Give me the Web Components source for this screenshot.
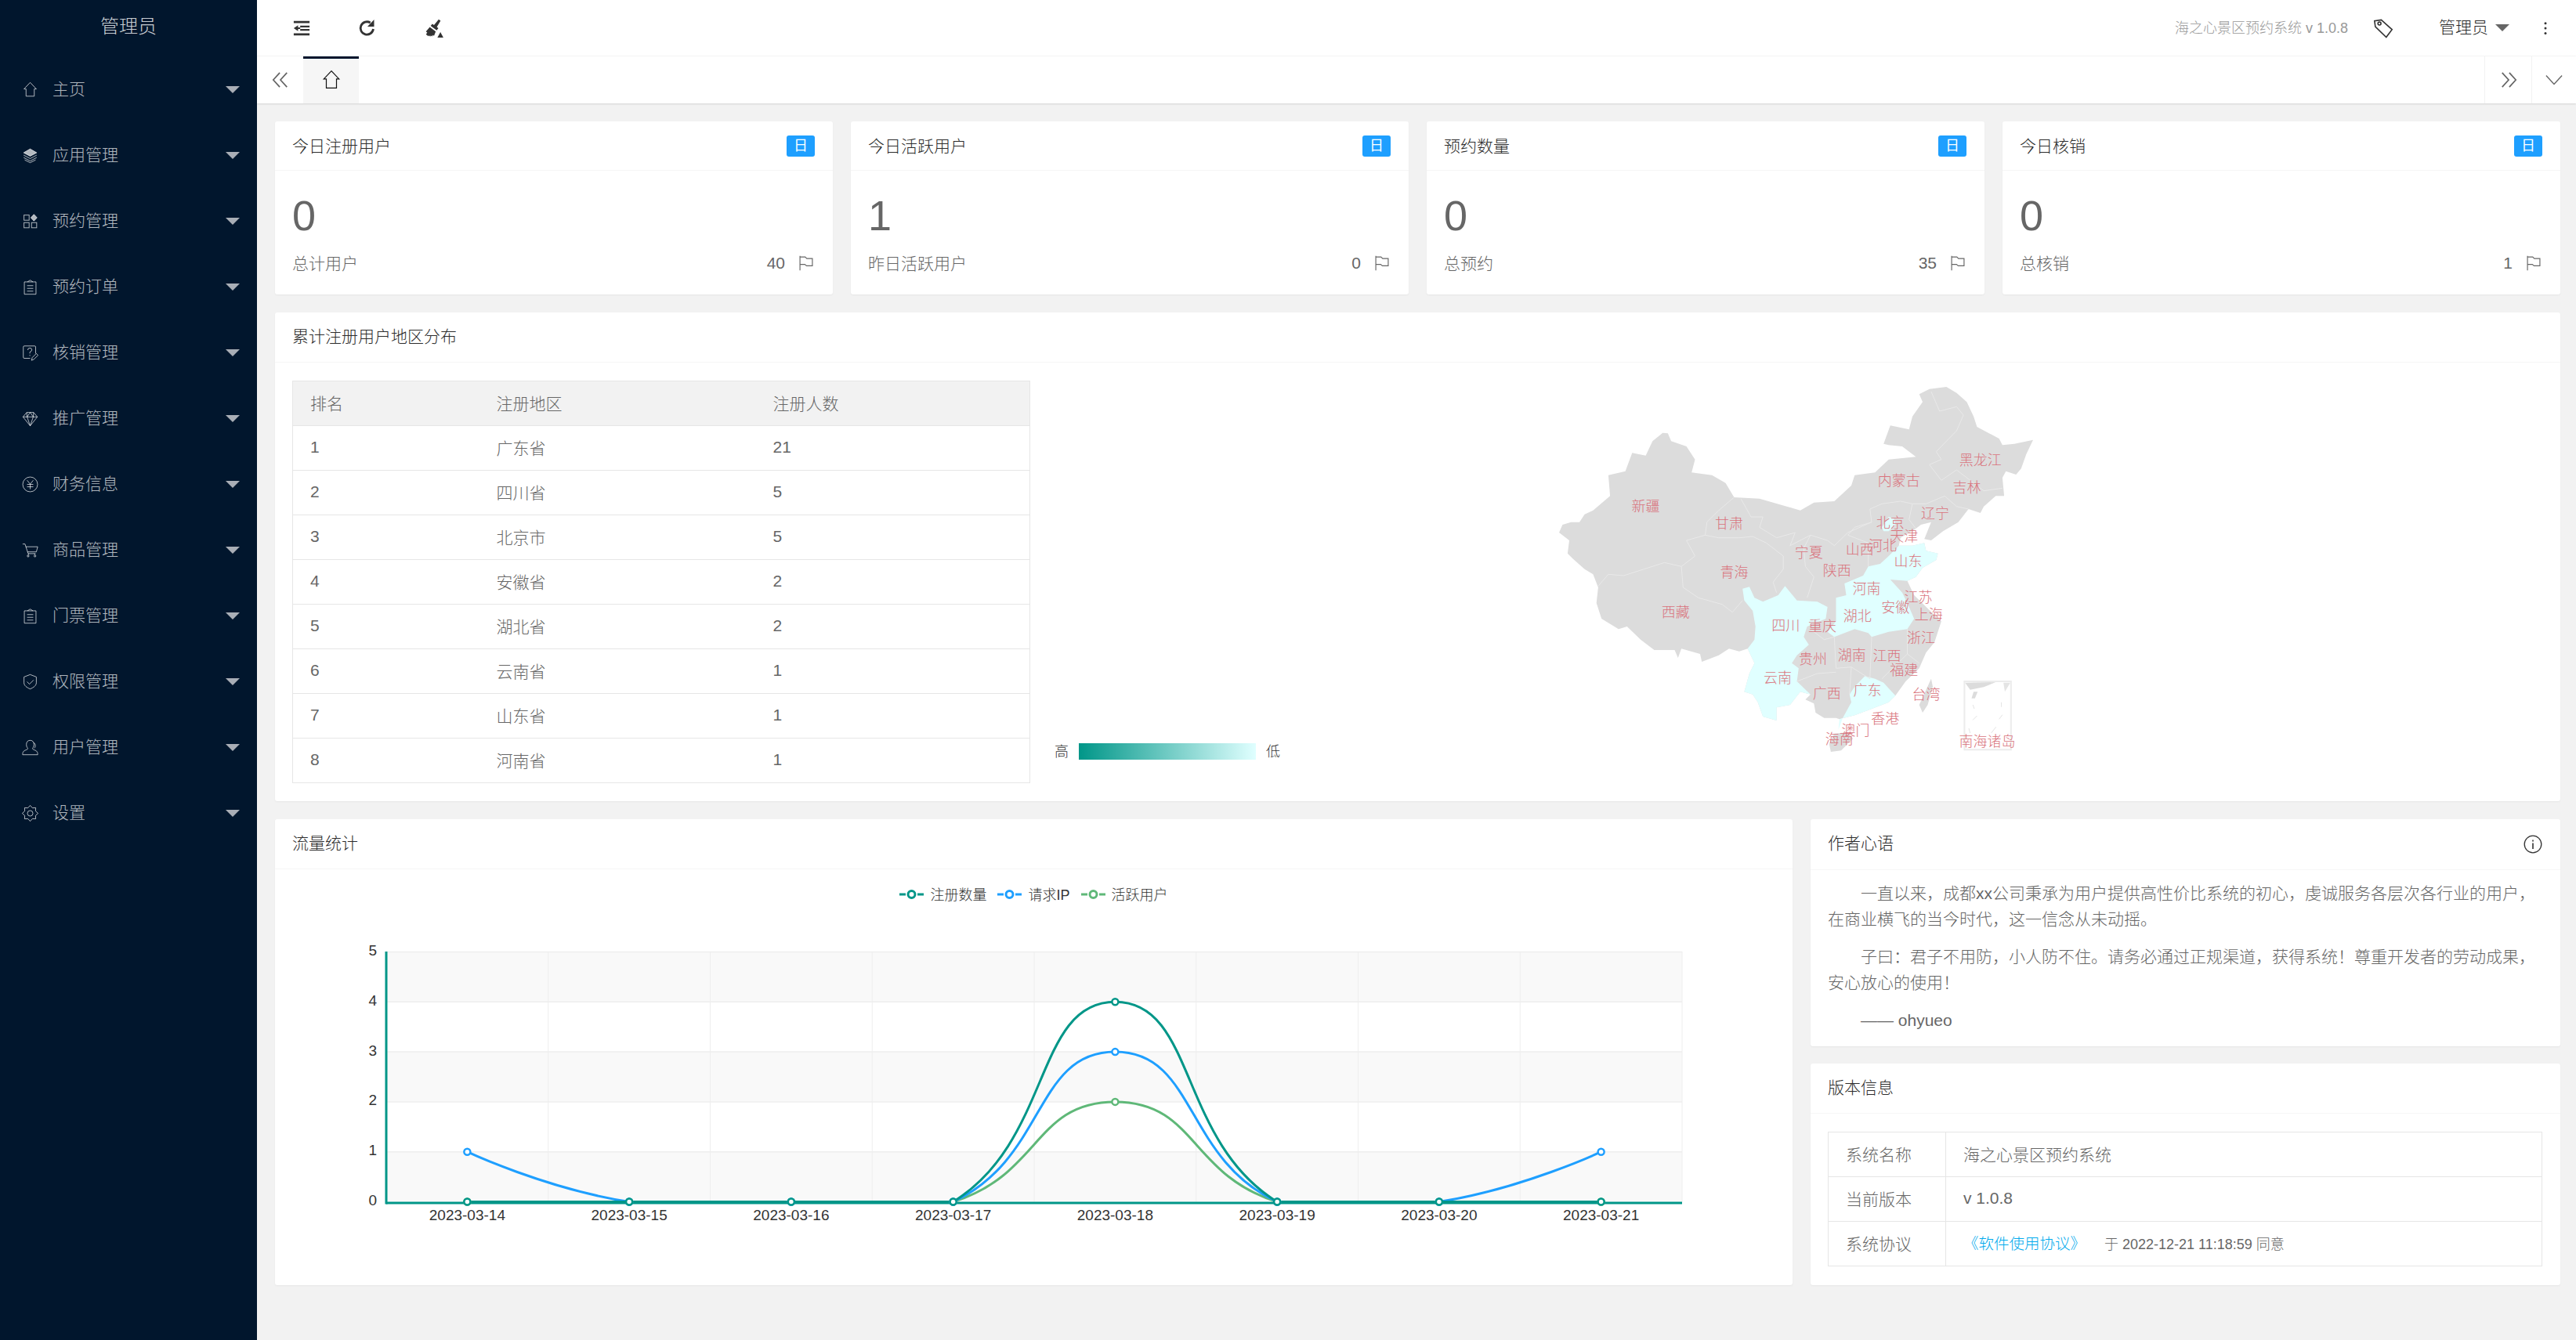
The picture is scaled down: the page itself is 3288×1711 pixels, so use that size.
<!DOCTYPE html>
<html lang="zh-CN">
<head>
<meta charset="utf-8">
<title>海之心景区预约系统</title>
<style>
  html, body {
    background: #f2f2f2;
    color: #333;
    font-family: 'Liberation Sans', 'Noto Sans CJK SC', sans-serif;
    font-weight: 300;
    height: 100%;
    margin: 0;
    overflow: hidden;
  }
</style>
</head>
<body>
<admin-shell>
  <side-menu slot="side" logo="管理员">
    <side-item icon="home" label="主页"></side-item>
    <side-item icon="layers" label="应用管理"></side-item>
    <side-item icon="apps" label="预约管理"></side-item>
    <side-item icon="clipboard" label="预约订单"></side-item>
    <side-item icon="verify" label="核销管理"></side-item>
    <side-item icon="gem" label="推广管理"></side-item>
    <side-item icon="yen" label="财务信息"></side-item>
    <side-item icon="cart" label="商品管理"></side-item>
    <side-item icon="clipboard" label="门票管理"></side-item>
    <side-item icon="shield" label="权限管理"></side-item>
    <side-item icon="user" label="用户管理"></side-item>
    <side-item icon="gear" label="设置"></side-item>
  </side-menu>
  <top-bar slot="top" version="海之心景区预约系统 v 1.0.8" user="管理员"></top-bar>
  <tab-bar slot="top"></tab-bar>

  <div class="stats" style="display:grid;grid-template-columns:repeat(4,1fr);gap:23px">
    <stat-card title="今日注册用户" value="0" note="总计用户" total="40"></stat-card>
    <stat-card title="今日活跃用户" value="1" note="昨日活跃用户" total="0"></stat-card>
    <stat-card title="预约数量" value="0" note="总预约" total="35"></stat-card>
    <stat-card title="今日核销" value="0" note="总核销" total="1"></stat-card>
  </div>

  <panel-card title="累计注册用户地区分布">
    <div style="display:flex;padding:23px 23px 23px 22px">
      <rank-table></rank-table>
      <china-map></china-map>
    </div>
  </panel-card>

  <div style="display:grid;grid-template-columns:1fr 957px;gap:23px">
    <panel-card title="流量统计">
      <traffic-chart></traffic-chart>
    </panel-card>
    <div style="display:flex;flex-direction:column;gap:22px">
      <panel-card title="作者心语" head="65">
        <ui-icon slot="action" name="info" size="24" style="color:#333"></ui-icon>
        <author-note></author-note>
      </panel-card>
      <panel-card title="版本信息" style="flex:1">
        <version-table></version-table>
      </panel-card>
    </div>
  </div>
</admin-shell>

<script>
// Gear outline, 8 teeth
function gearPath() {
  let d = '';
  for( let i = 0; i < 16; i++ ) {
    const a = ( i / 16 ) * Math.PI * 2;
    const r = i % 2 === 0 ? 11.5 : 8.5;
    d += `${i === 0 ? 'M' : 'L'}${( 12 + Math.cos( a ) * r ).toFixed( 1 )} ${( 12 + Math.sin( a ) * r ).toFixed( 1 )}`;
  }
  return d + 'Z';
}

const ICONS = {
  home: '<path d="M12 1.5 3 11h3v10.5h12V11h3z"/>',
  layers: '<path d="M12 2.500 2.500 8l9.500 5 9.500-5z" fill="currentColor"/><path d="M2.500 11.500l9.500 5 9.500-5M2.500 15l9.500 5 9.500-5M4 18.500l8 4 8-4"/>',
  apps: '<rect x="3" y="3" width="7.500" height="7.500"/><path d="M17.500 2l4.500 4.800-4.500 4.800-4.500-4.800z" fill="currentColor"/><rect x="3" y="14" width="7.500" height="7.500"/><rect x="14" y="14" width="7.500" height="7.500"/>',
  clipboard: '<path d="M8 4.500H3.500v18h17v-18H16M8 4.500 12 2l4 2.500z"/><path d="M7.500 10h9M7.500 14h9M7.500 18h9"/>',
  verify: '<path d="M20 13V3.500q0-1.500-1.500-1.500H3.500Q2 2 2 3.500v15Q2 20 3.500 20H12"/><path d="M8.500 8q0-3 3-3t3 2.800q0 1.700-3 3.200v2M11.500 15v1.500"/><path d="M14 23l1-4 6-6 2.500 2.500-6 6z"/>',
  gem: '<path d="M7 3h10l5.500 6.500L12 22.500 1.500 9.500zM1.500 9.500h21M7.500 9.500 12 22.500l4.500-13M7 3l.5 6.500L12 3l4.500 6.500L17 3"/>',
  yen: '<circle cx="12" cy="12" r="10.800"/><path d="M7.500 6l4.500 5.500L16.500 6M12 11.500V19M7.500 12h9M7.500 15.500h9"/>',
  cart: '<path d="M1 3h3.500L9 17h11M5.500 7H23l-2 7.500H8M10 17l-1 2M18 17l1 2"/><circle cx="9" cy="20.500" r="1.300"/><circle cx="19" cy="20.500" r="1.300"/>',
  shield: '<path d="M12 1.500 3 5v8.500c0 4 4 7 9 9 5-2 9-5 9-9V5z"/><path d="M7.500 12l3.500 3.500 6-6"/>',
  user: '<path d="M1 22.500h22c0-4-1-5.500-5-7-1.500-.6-2.500-1-2.500-2.500 1.500-1.500 2-3.500 2-5.500 0-3.500-2-6-5.500-6S6.500 4 6.500 7.500c0 2 .5 4 2 5.500 0 1.500-1 1.900-2.500 2.500-4 1.500-5 3-5 7z"/><path d="M17 5c3 1 3.500 6 1 8"/>',
  gear: `<path d="${gearPath()}"/><circle cx="12" cy="12" r="4"/>`,
  outdent: '<path fill="currentColor" stroke="none" d="M1 2h22v3H1zM10 8.500h13v2.500H10zM10 13h13v2.500H10zM1 19h22v3H1zM1 12l6-4v3h3v2.200H7v3z"/>',
  refresh: '<path stroke-width="2.800" d="M19.500 13a8.200 8.200 0 1 1-3.800-8"/><path fill="currentColor" stroke="none" d="M20.500 1v9h-8.500z"/>',
  brush: '<path fill="currentColor" stroke="none" d="M17.500 1.500l2.200 1.800-4.400 7.200 1.800 1.500-2 2.500L8 9.200l2-2.300 2 1.500z"/><path fill="currentColor" stroke="none" d="M7 10.500l7 5.500-2 5-1.500-1-.8 1.700-1.500-1.200-.6 1.500L6 20.500l-.6 1L3.500 20l-1-.8 1.500-2-1.500-1.200z"/><path fill="currentColor" stroke="none" d="M19.500 16.500l3.500 6.500h-7z"/>',
  tag: '<path stroke-width="1.500" d="M3 7V2h8l11 13-8 8L3 9z" transform="rotate(-8 12 12)"/><circle cx="7.500" cy="6.500" r="1.800" stroke-width="1.500"/>',
  flag: '<path stroke-width="1.400" d="M2.500 1v22M2.500 2.500h8l2.500 2.500h8.500v11h-9L10 14H2.500"/>',
  dots: '<g fill="currentColor" stroke="none"><circle cx="12" cy="3.500" r="2"/><circle cx="12" cy="12" r="2"/><circle cx="12" cy="20.500" r="2"/></g>',
  info: '<circle cx="12" cy="12" r="10.800" stroke-width="1.300"/><path stroke-width="1.600" d="M12 10.500v7.500M12 6.500v2"/>',
  left: '<path stroke-width="1.900" d="M11 2 2 12l9 10M21 2l-9 10 9 10"/>',
  right: '<path stroke-width="1.900" d="M3 2l9 10-9 10M13 2l9 10-9 10"/>',
  down: '<path stroke-width="1.500" d="M1 6l11 12L23 6"/>'
};

class UiIcon extends HTMLElement {
  constructor() {
    super();
    this.attachShadow( {mode: 'open'} );
  }

  static get observedAttributes() {
    return ['name', 'size'];
  }

  attributeChangedCallback() {
    this._render();
  }

  connectedCallback() {
    this._render();
  }

  _render() {
    const size = this.getAttribute( 'size' ) || 21;
    this.shadowRoot.innerHTML = `
      <style>
        :host { display: inline-flex; flex: none; line-height: 0; }
        svg { fill: none; stroke: currentColor; stroke-width: 1.100; }
      </style>
      <svg width="${size}" height="${size}" viewBox="0 0 24 24">${ICONS[this.getAttribute( 'name' )] || ''}</svg>
    `;
  }
}
customElements.define( 'ui-icon', UiIcon );

class AdminShell extends HTMLElement {
  constructor() {
    super();
    this.attachShadow( {mode: 'open'} ).innerHTML = `
      <style>
        :host { display: flex; height: 1711px; width: 3288px; }
        .side { flex: none; width: 328px; }
        .main { display: flex; flex: 1; flex-direction: column; min-width: 0; }
        .content { display: flex; flex-direction: column; gap: 23px; padding: 23px 20px 23px 23px; }
      </style>
      <div class="side"><slot name="side"></slot></div>
      <div class="main">
        <slot name="top"></slot>
        <div class="content"><slot></slot></div>
      </div>
    `;
  }
}
customElements.define( 'admin-shell', AdminShell );

class SideMenu extends HTMLElement {
  constructor() {
    super();
    this.attachShadow( {mode: 'open'} ).innerHTML = `
      <style>
        :host { background: #01162d; display: block; height: 1711px; }
        .logo {
          color: rgba( 255, 255, 255, .8 );
          font-size: 24px;
          height: 70px;
          line-height: 68px;
          padding-bottom: 2px;
          text-align: center;
        }
      </style>
      <div class="logo"></div>
      <slot></slot>
    `;
  }
  connectedCallback() {
    this.shadowRoot.querySelector( '.logo' ).textContent = this.getAttribute( 'logo' );
  }
}
customElements.define( 'side-menu', SideMenu );

class SideItem extends HTMLElement {
  constructor() {
    super();
    this.attachShadow( {mode: 'open'} ).innerHTML = `
      <style>
        :host {
          align-items: center;
          color: rgba( 255, 255, 255, .7 );
          display: flex;
          font-size: 21px;
          gap: 18px;
          height: 84px;
          padding: 0 22px 0 28px;
        }
        span { padding-bottom: 4px; }
        i {
          border-left: 9px solid transparent;
          border-right: 9px solid transparent;
          border-top: 9px solid #a9aeb6;
          margin-left: auto;
        }
      </style>
      <ui-icon></ui-icon>
      <span></span>
      <i></i>
    `;
  }
  connectedCallback() {
    this.shadowRoot.querySelector( 'ui-icon' ).setAttribute( 'name', this.getAttribute( 'icon' ) );
    this.shadowRoot.querySelector( 'span' ).textContent = this.getAttribute( 'label' );
  }
}
customElements.define( 'side-item', SideItem );

class TopBar extends HTMLElement {
  constructor() {
    super();
    this.attachShadow( {mode: 'open'} ).innerHTML = `
      <style>
        :host {
          align-items: center;
          background: #fff;
          border-bottom: 1px solid #f6f6f6;
          box-sizing: border-box;
          color: #333;
          display: flex;
          height: 72px;
          padding: 0 37px 0 46px;
        }
        .tools { align-items: center; display: flex; }
        .right { align-items: center; display: flex; margin-left: auto; }
        .version { color: #999; font-size: 18px; padding-bottom: 4px; }
        .user { color: #2b2b2b; font-size: 21px; padding-bottom: 5px; }
        i {
          border-left: 9px solid transparent;
          border-right: 9px solid transparent;
          border-top: 9px solid #666;
          margin-left: 9px;
        }
      </style>
      <div class="tools">
        <ui-icon name="outdent" size="22"></ui-icon>
        <ui-icon name="refresh" size="24" style="margin-left:61px"></ui-icon>
        <ui-icon name="brush" size="26" style="margin-left:60px"></ui-icon>
      </div>
      <div class="right">
        <span class="version"></span>
        <ui-icon name="tag" size="26" style="margin-left:32px"></ui-icon>
        <span class="user" style="margin-left:58px"></span>
        <i></i>
        <ui-icon name="dots" size="18" style="margin-left:37px;margin-right:-7px"></ui-icon>
      </div>
    `;
  }
  connectedCallback() {
    this.shadowRoot.querySelector( '.version' ).textContent = this.getAttribute( 'version' );
    this.shadowRoot.querySelector( '.user' ).textContent = this.getAttribute( 'user' );
  }
}
customElements.define( 'top-bar', TopBar );

class TabBar extends HTMLElement {
  constructor() {
    super();
    this.attachShadow( {mode: 'open'} ).innerHTML = `
      <style>
        :host {
          align-items: stretch;
          background: #fff;
          box-shadow: 0 1px 2px rgba( 0, 0, 0, .12 );
          color: #666;
          display: flex;
          height: 60px;
          position: relative;
        }
        .nav { align-items: center; display: flex; justify-content: center; width: 59px; }
        .tab {
          align-items: center;
          background: #f6f6f6;
          border-top: 3px solid #01162d;
          box-sizing: border-box;
          color: #111;
          display: flex;
          justify-content: center;
          width: 71px;
        }
        .end { align-items: center; border-left: 1px solid #f2f2f2; display: flex; justify-content: center; }
      </style>
      <div class="nav"><ui-icon name="left" size="22"></ui-icon></div>
      <div class="tab"><ui-icon name="home" size="26" style="margin-top:-3px"></ui-icon></div>
      <div class="end" style="margin-left:auto;width:59px"><ui-icon name="right" size="22"></ui-icon></div>
      <div class="end" style="width:56px"><ui-icon name="down" size="22"></ui-icon></div>
    `;
  }
}
customElements.define( 'tab-bar', TabBar );

class PanelCard extends HTMLElement {
  constructor() {
    super();
    this.attachShadow( {mode: 'open'} ).innerHTML = `
      <style>
        :host {
          background: #fff;
          border-radius: 3px;
          box-shadow: 0 1px 2px rgba( 0, 0, 0, .05 );
          display: block;
        }
        header {
          align-items: center;
          border-bottom: 1px solid #f6f6f6;
          box-sizing: border-box;
          color: #2b2b2b;
          display: flex;
          font-size: 21px;
          height: 64px;
          justify-content: space-between;
          padding: 0 23px 0 22px;
        }
        span { padding-bottom: 6px; }
      </style>
      <header><span></span><slot name="action"></slot></header>
      <slot></slot>
    `;
  }
  connectedCallback() {
    this.shadowRoot.querySelector( 'span' ).textContent = this.getAttribute( 'title' );
    this.removeAttribute( 'title' );
    if( this.hasAttribute( 'head' ) )
      this.shadowRoot.querySelector( 'header' ).style.height = this.getAttribute( 'head' ) + 'px';
  }
}
customElements.define( 'panel-card', PanelCard );

class StatCard extends HTMLElement {
  constructor() {
    super();
    this.attachShadow( {mode: 'open'} ).innerHTML = `
      <style>
        :host {
          background: #fff;
          border-radius: 3px;
          box-shadow: 0 1px 2px rgba( 0, 0, 0, .05 );
          color: #666;
          display: block;
          height: 221px;
        }
        header {
          align-items: center;
          border-bottom: 1px solid #f6f6f6;
          box-sizing: border-box;
          color: #2b2b2b;
          display: flex;
          font-size: 21px;
          height: 63px;
          justify-content: space-between;
          padding: 0 23px 0 22px;
        }
        .title { padding-bottom: 3px; }
        b {
          background: #1e9fff;
          border-radius: 3px;
          color: #fff;
          font-size: 18px;
          font-weight: 400;
          height: 27px;
          line-height: 27px;
          text-align: center;
          width: 36px;
        }
        .value { color: #666; font-size: 54px; line-height: 54px; padding: 30px 22px 0; }
        .foot {
          align-items: center;
          display: flex;
          font-size: 21px;
          height: 30px;
          margin-top: 19px;
          padding: 0 24px 0 22px;
        }
        .note { padding-bottom: 3px; }
        .total { font-size: 21px; margin-left: auto; margin-right: 17px; }
      </style>
      <header><span class="title"></span><b>日</b></header>
      <div class="value"></div>
      <div class="foot">
        <span class="note"></span>
        <span class="total"></span>
        <ui-icon name="flag" size="20"></ui-icon>
      </div>
    `;
  }
  connectedCallback() {
    const $ = ( s ) => this.shadowRoot.querySelector( s );
    $( '.title' ).textContent = this.getAttribute( 'title' );
    this.removeAttribute( 'title' );
    $( '.value' ).textContent = this.getAttribute( 'value' );
    $( '.note' ).textContent = this.getAttribute( 'note' );
    $( '.total' ).textContent = this.getAttribute( 'total' );
  }
}
customElements.define( 'stat-card', StatCard );

const TABLE_STYLE = `
  table { border-collapse: collapse; color: #666; font-size: 21px; table-layout: fixed; width: 100%; }
  th, td {
    border: 1px solid #e6e6e6;
    box-sizing: border-box;
    font-weight: 300;
    height: 57px;
    padding: 0 22px 3px;
    text-align: left;
  }
`;

class RankTable extends HTMLElement {
  constructor() {
    super();
    const rows = [
      ['广东省', 21], ['四川省', 5], ['北京市', 5], ['安徽省', 2],
      ['湖北省', 2], ['云南省', 1], ['山东省', 1], ['河南省', 1]
    ];
    this.attachShadow( {mode: 'open'} ).innerHTML = `
      <style>
        :host { display: block; flex: none; width: 941px; }
        ${TABLE_STYLE}
        thead th { background: #f2f2f2; border-left: 0; border-right: 0; }
        tbody td { border-left: 0; border-right: 0; }
        tr > :first-child { border-left: 1px solid #e6e6e6; }
        tr > :last-child { border-right: 1px solid #e6e6e6; }
      </style>
      <table>
        <colgroup><col style="width:238px"><col style="width:353px"><col style="width:350px"></colgroup>
        <thead><tr><th>排名</th><th>注册地区</th><th>注册人数</th></tr></thead>
        <tbody>
          ${rows.map( ( r, i ) => `<tr><td>${i + 1}</td><td>${r[0]}</td><td>${r[1]}</td></tr>` ).join( '' )}
        </tbody>
      </table>
    `;
  }
}
customElements.define( 'rank-table', RankTable );

// Coordinates are measured on a 680x520 crop of the map, at x/2.306 and y/3
const MAP = {
  china: [1150,100,1180,80,1230,72,1260,95,1290,130,1310,185,1320,225,1385,270,1395,295,1430,290,1485,275,1465,330,1450,385,1435,408,1405,395,1395,420,1400,490,1375,490,1340,530,1330,555,1295,540,1265,590,1220,625,1185,660,1165,655,1185,590,1155,600,1140,615,1095,650,1090,680,1130,680,1165,670,1170,700,1205,710,1200,735,1160,765,1140,800,1115,815,1135,870,1190,940,1215,970,1195,1050,1170,1090,1150,1150,1110,1200,1080,1255,1060,1280,1000,1310,960,1330,915,1345,905,1340,870,1340,845,1320,840,1285,815,1270,830,1250,800,1240,770,1290,730,1300,730,1350,690,1335,675,1280,660,1250,635,1240,650,1170,665,1130,645,1075,620,1085,590,1075,560,1100,510,1125,505,1095,450,1075,440,1110,430,1080,370,1080,330,1040,290,990,265,1000,215,960,200,900,205,840,190,790,165,770,130,730,115,710,120,660,90,630,100,600,125,590,150,590,165,560,190,545,240,490,235,410,285,395,305,325,345,335,365,280,395,248,410,250,420,280,465,300,490,350,480,400,540,410,580,440,605,495,680,500,760,530,800,545,840,515,900,510,950,450,960,410,1020,400,1060,350,1140,340,1100,300,1060,295,1045,290,1065,220,1120,235,1130,185,1160,130],
  hainan: [885,1440,900,1400,940,1395,955,1420,920,1465,890,1470],
  taiwan: [1150,1290,1185,1190,1190,1220,1175,1290,1160,1320],
  hit: [
    [630,845,650,838,665,880,690,895,735,870,755,835,790,890,850,895,880,915,875,960,820,990,810,1030,825,1060,790,1100,775,1130,795,1150,790,1200,830,1250,800,1240,770,1290,730,1300,730,1350,690,1335,675,1280,660,1250,635,1240,650,1170,665,1130,645,1075,665,1040,668,990,660,930,635,890],
    [1035,750,1060,720,1090,680,1130,680,1165,670,1170,700,1205,710,1200,735,1160,765,1140,800,1115,815,1065,810,1100,860,1115,900,1135,960,1115,1000,1060,1010,1010,1030,1000,1015,960,1000,900,1030,880,1010,905,970,905,880,935,870,930,825,985,795,1000,760],
    [1040,610,1060,570,1075,575,1080,600,1060,625,1045,625],
    [960,1220,990,1180,1020,1190,1045,1205,1080,1255,1060,1280,1000,1310,960,1330,915,1345,912,1385,925,1340,950,1280,945,1250]
  ],
  lines: [
    [605,495,560,545,525,590,520,640,465,660,490,720,450,760,400,745,340,770,280,795,235,790,205,835],
    [450,760,455,840,500,880,570,905,600,935,630,890],
    [520,640,560,650,620,650,660,645,700,670,750,720,750,770,720,820,730,860],
    [625,500,655,570,690,570,680,610,730,650,785,630,770,680,830,640,880,660,900,680,940,630,1010,590],
    [830,640,810,690,815,760,840,800,820,880],
    [1180,370,1215,350,1200,320,1260,240,1280,180,1260,148,1210,165,1185,90],
    [1180,370,1215,430,1260,390,1340,470,1395,460],
    [1130,520,1170,520,1225,490,1260,530,1295,540],
    [1005,540,1040,520,1095,510,1130,520,1120,580,1140,615],
    [1005,540,1010,590,960,610,940,640,1000,670,1000,760],
    [830,1000,870,1040,900,1030,905,1150,950,1145,1005,1190,1010,1030],
    [1115,1000,1115,1095,1150,1130],
    [1040,1190,1115,1095],
    [790,1200,850,1170,905,1165],
    [945,1250,950,1145]
  ],
  labels: [
    ['黑龙江',1330,355],['内蒙古',1090,432],['吉林',1290,460],['新疆',345,532],['辽宁',1197,558],
    ['甘肃',590,597],['北京',1065,593],['天津',1105,645],['河北',1042,682],['山西',975,695],
    ['宁夏',825,708],['山东',1117,742],['青海',605,782],['陕西',908,776],['河南',995,845],
    ['江苏',1147,880],['安徽',1080,917],['上海',1178,945],['西藏',433,935],['湖北',968,950],
    ['四川',757,988],['重庆',865,990],['浙江',1155,1035],['湖南',952,1100],['江西',1055,1103],
    ['贵州',837,1117],['福建',1105,1157],['云南',733,1187],['广西',878,1248],['广东',997,1235],
    ['台湾',1170,1252],['香港',1050,1345],['澳门',963,1388],['海南',915,1423],['南海诸岛',1350,1430]
  ]
};

class ChinaMap extends HTMLElement {
  constructor() {
    super();
    const pts = ( list ) => {
      let out = '';
      for( let i = 0; i < list.length; i += 2 )
        out += `${( list[i] / 2.306 ).toFixed( 1 )},${( list[i + 1] / 3 ).toFixed( 1 )} `;
      return out;
    };
    const poly = ( list, fill ) => `<polygon points="${pts( list )}" fill="${fill}"/>`;
    const line = ( list, color ) => `<polyline points="${pts( list )}" fill="none" stroke="${color}"/>`;

    this.attachShadow( {mode: 'open'} ).innerHTML = `
      <style>
        :host { display: block; flex: 1; position: relative; }
        svg { left: 637px; overflow: visible; position: absolute; top: -16px; }
        text {
          dominant-baseline: central;
          fill: #d9737c;
          font-family: 'Liberation Sans', 'Noto Sans CJK SC', sans-serif;
          font-size: 18px;
          text-anchor: middle;
        }
        .legend {
          align-items: center;
          color: #333;
          display: flex;
          font-size: 18px;
          gap: 13px;
          left: 32px;
          position: absolute;
          top: 459px;
        }
        .legend span { padding-bottom: 3px; }
        .bar { background: linear-gradient( to right, #009688, #e0ffff ); height: 21px; width: 226px; }
      </style>
      <svg width="680" height="520">
        ${poly( MAP.china, '#dcdcdc' )}
        ${poly( MAP.hainan, '#dcdcdc' )}
        ${poly( MAP.taiwan, '#dcdcdc' )}
        ${MAP.hit.map( ( p ) => poly( p, '#e0ffff' ) ).join( '' )}
        ${MAP.lines.map( ( p ) => line( p, '#e9e9e9' ) ).join( '' )}
        <polygon points="${pts( [1283,1200,1420,1200,1420,1462,1283,1462] )}" fill="none" stroke="#ececec" stroke-width="2"/>
        ${poly( [1285,1205,1375,1203,1340,1222,1300,1232], '#dcdcdc' )}
        ${poly( [1310,1240,1322,1240,1314,1265,1304,1265], '#dcdcdc' )}
        ${poly( [1398,1205,1418,1205,1402,1240], '#e4e4e4' )}
        ${line( [1392,1280,1392,1298], '#e4e4e4' )}
        ${line( [1395,1328,1385,1345], '#e4e4e4' )}
        ${line( [1320,1332,1308,1348], '#e4e4e4' )}
        ${line( [1376,1375,1362,1398], '#e4e4e4' )}
        ${line( [1296,1380,1300,1398], '#e4e4e4' )}
        ${line( [1308,1290,1312,1305], '#e4e4e4' )}
        ${MAP.labels.map( ( l ) => `<text x="${( l[1] / 2.306 ).toFixed( 1 )}" y="${( l[2] / 3 ).toFixed( 1 )}">${l[0]}</text>` ).join( '' )}
      </svg>
      <div class="legend"><span>高</span><div class="bar"></div><span>低</span></div>
    `;
  }
}
customElements.define( 'china-map', ChinaMap );

class TrafficChart extends HTMLElement {
  constructor() {
    super();
    const left = 142;
    const right = 1796;
    const top = 61;
    const zero = 380.500;
    const stepY = 63.800;
    const stepX = ( right - left ) / 8;
    const X = ( i ) => left + stepX * ( i + .5 );
    const Y = ( v ) => zero - stepY * v;
    const dates = ['2023-03-14', '2023-03-15', '2023-03-16', '2023-03-17', '2023-03-18', '2023-03-19', '2023-03-20', '2023-03-21'];
    const series = [
      {color: '#5fb878', data: [0, 0, 0, 0, 2, 0, 0, 0]},
      {color: '#1e9fff', data: [1, 0, 0, 0, 3, 0, 0, 1]},
      {color: '#009688', data: [0, 0, 0, 0, 4, 0, 0, 0]}
    ];

    let grid = '';
    for( let v = 5; v > 0; v -= 2 )
      grid += `<rect x="${left}" y="${Y( v )}" width="${right - left}" height="${stepY}" fill="#f9f9f9"/>`;
    for( let v = 1; v <= 5; v++ )
      grid += `<line x1="${left}" x2="${right}" y1="${Y( v )}" y2="${Y( v )}" stroke="#eee" stroke-width="1.500"/>`;
    for( let i = 1; i <= 8; i++ )
      grid += `<line x1="${left + stepX * i}" x2="${left + stepX * i}" y1="${top}" y2="${zero}" stroke="#eee"/>`;

    const labels = [0, 1, 2, 3, 4, 5].map( ( v ) => `<text class="y" x="130" y="${Y( v ) - 2}">${v}</text>` ).join( '' )
      + dates.map( ( d, i ) => `<text class="x" x="${X( i )}" y="397">${d}</text>` ).join( '' );

    const lines = series.map( ( s ) => {
      const p = s.data.map( ( v, i ) => [X( i ), Y( v )] );
      const minY = Math.min( ...p.map( ( a ) => a[1] ) );
      const maxY = Math.max( ...p.map( ( a ) => a[1] ) );
      const cps = p.map( ( c, i ) => {
        const a = p[i - 1] || c;
        const b = p[i + 1] || c;
        if( a === c || b === c )
          return [c, c];
        const prevLen = Math.hypot( c[0] - a[0], c[1] - a[1] );
        const nextLen = Math.hypot( b[0] - c[0], b[1] - c[1] );
        const ratio = nextLen / ( prevLen + nextLen );
        const vx = ( b[0] - a[0] ) * .5;
        const vy = ( b[1] - a[1] ) * .5;
        const clamp = ( y ) => Math.min( maxY, Math.max( minY, y ) );
        return [
          [c[0] - vx * ( 1 - ratio ), clamp( c[1] - vy * ( 1 - ratio ) )],
          [c[0] + vx * ratio, clamp( c[1] + vy * ratio )]
        ];
      } );
      let d = `M${p[0][0]} ${p[0][1]}`;
      for( let i = 1; i < p.length; i++ )
        d += `C${cps[i - 1][1][0]} ${cps[i - 1][1][1]} ${cps[i][0][0]} ${cps[i][0][1]} ${p[i][0]} ${p[i][1]}`;
      return `<path d="${d}" fill="none" stroke="${s.color}" stroke-width="3"/>`;
    } ).join( '' );

    const dots = series.map( ( s ) => s.data.map( ( v, i ) => `<circle cx="${X( i )}" cy="${Y( v )}" r="4" fill="#fff" stroke="${s.color}" stroke-width="2.500"/>` ).join( '' ) ).join( '' );

    const key = ( color, label ) => `
      <span class="key">
        <svg width="31" height="12"><path d="M0 6h8M23 6h8" stroke="${color}" stroke-width="3"/><circle cx="15.500" cy="6" r="4.500" fill="#fff" stroke="${color}" stroke-width="3"/></svg>
        <span style="padding-bottom:3px">${label}</span>
      </span>`;

    this.attachShadow( {mode: 'open'} ).innerHTML = `
      <style>
        :host { display: block; }
        .legend {
          align-items: center;
          color: #333;
          display: flex;
          font-size: 18px;
          gap: 14px;
          height: 24px;
          justify-content: center;
          padding-top: 20px;
        }
        .key { align-items: center; display: flex; gap: 8px; }
        svg { display: block; }
        text { fill: #333; font-family: 'Liberation Sans', sans-serif; font-size: 19px; }
        .y { dominant-baseline: central; text-anchor: end; }
        .x { dominant-baseline: central; text-anchor: middle; }
      </style>
      <div class="legend">
        ${key( '#009688', '注册数量' )}
        ${key( '#1e9fff', '请求IP' )}
        ${key( '#5fb878', '活跃用户' )}
      </div>
      <svg class="plot" width="1937" height="486">
        ${grid}
        ${labels}
        <line x1="${left}" x2="${left}" y1="${top}" y2="${zero + 3}" stroke="#009688" stroke-width="3"/>
        <line x1="${left}" x2="${right}" y1="${zero + 1.500}" y2="${zero + 1.500}" stroke="#009688" stroke-width="3"/>
        ${lines}
        ${dots}
      </svg>
    `;
  }
}
customElements.define( 'traffic-chart', TrafficChart );

class AuthorNote extends HTMLElement {
  constructor() {
    super();
    this.attachShadow( {mode: 'open'} ).innerHTML = `
      <style>
        :host { color: #666; display: block; font-size: 21px; line-height: 33px; padding: 13px 23px 17px 22px; }
        p { margin: 0 0 15px; text-indent: 42px; }
        p:last-child { margin: 0; }
      </style>
      <p>一直以来，成都xx公司秉承为用户提供高性价比系统的初心，虔诚服务各层次各行业的用户，在商业横飞的当今时代，这一信念从未动摇。</p>
      <p>子曰：君子不用防，小人防不住。请务必通过正规渠道，获得系统！尊重开发者的劳动成果，安心放心的使用！</p>
      <p>—— ohyueo</p>
    `;
  }
}
customElements.define( 'author-note', AuthorNote );

class VersionTable extends HTMLElement {
  constructor() {
    super();
    this.attachShadow( {mode: 'open'} ).innerHTML = `
      <style>
        :host { display: block; padding: 23px 23px 24px 22px; }
        ${TABLE_STYLE}
        a { color: #01aaed; font-size: 19.500px; text-decoration: none; }
        small { font-size: 18px; margin-left: 24px; }
      </style>
      <table>
        <colgroup><col style="width:150px"><col></colgroup>
        <tr><td>系统名称</td><td>海之心景区预约系统</td></tr>
        <tr><td>当前版本</td><td>v 1.0.8</td></tr>
        <tr><td>系统协议</td><td><a>《软件使用协议》</a><small>于 2022-12-21 11:18:59 同意</small></td></tr>
      </table>
    `;
  }
}
customElements.define( 'version-table', VersionTable );
</script>
</body>
</html>
